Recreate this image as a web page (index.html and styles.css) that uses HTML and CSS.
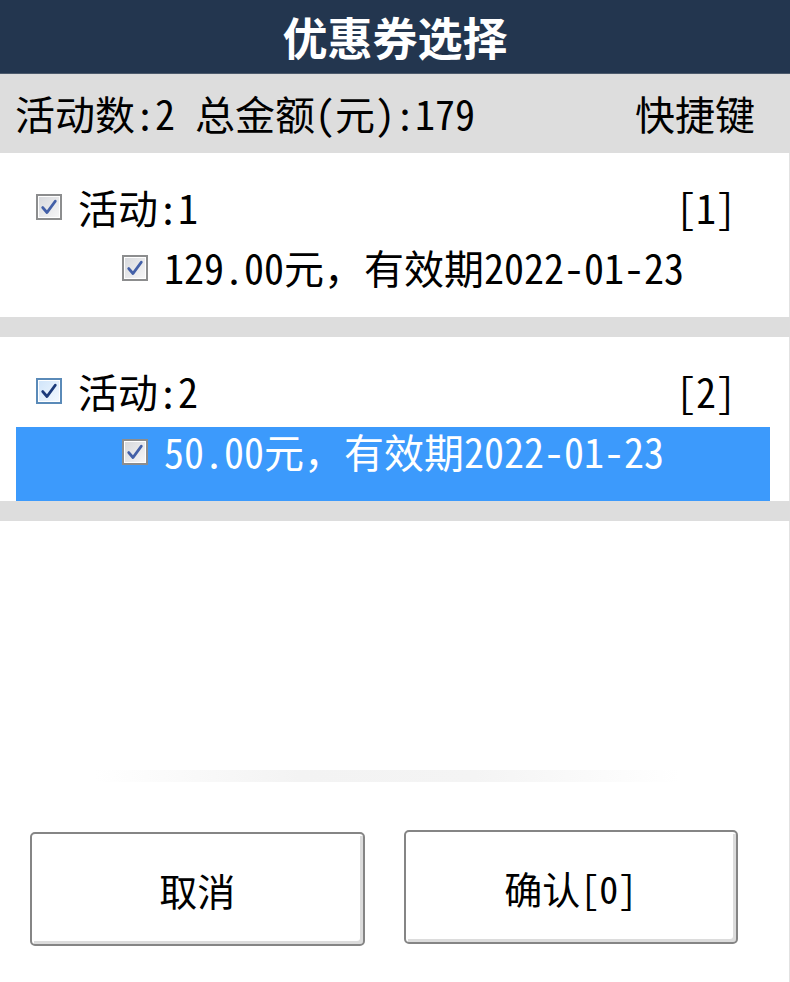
FILE: index.html
```html
<!DOCTYPE html>
<html lang="zh-CN">
<head>
    <meta charset="UTF-8">
    <meta name="viewport" content="width=device-width, initial-scale=1.0">
    <title>优惠券选择</title>
    <link rel="stylesheet" href="styles.css">
</head>
<body>
    <div class="dialog">
        <div class="title-bar">优惠券选择</div>

        <div class="summary">
            <span>活动数:2 总金额(元):179</span>
            <span>快捷键</span>
        </div>

        <!-- 活动 1 -->
        <div class="group">
            <div class="group-row">
                <span class="check">
                    <svg viewBox="0 0 16 16"><path d="M3 8.5 L6.4 12.4 L13 3.4" /></svg>
                </span>
                <span class="label">活动:1</span>
                <span class="key">[1]</span>
            </div>
            <div class="coupon-row">
                <span class="check">
                    <svg viewBox="0 0 16 16"><path d="M3 8.5 L6.4 12.4 L13 3.4" /></svg>
                </span>
                <span class="label">129.00元，有效期2022-01-23</span>
            </div>
        </div>

        <div class="divider"></div>

        <!-- 活动 2 -->
        <div class="group">
            <div class="group-row">
                <span class="check focus">
                    <svg viewBox="0 0 16 16"><path d="M3 8.5 L6.4 12.4 L13 3.4" /></svg>
                </span>
                <span class="label">活动:2</span>
                <span class="key">[2]</span>
            </div>
            <div class="coupon-row selected">
                <span class="check">
                    <svg viewBox="0 0 16 16"><path d="M3 8.5 L6.4 12.4 L13 3.4" /></svg>
                </span>
                <span class="label">50.00元，有效期2022-01-23</span>
            </div>
        </div>

        <div class="divider"></div>

        <div class="spacer">
            <div class="shade"></div>
        </div>

        <div class="actions">
            <button class="btn btn-cancel">取消</button>
            <button class="btn">确认[0]</button>
        </div>
    </div>
</body>
</html>
```

FILE: styles.css
```css
body {
    margin: 0;
    padding: 0;
    background-color: #ffffff;
    font-family: "Noto Sans Mono CJK SC", "Noto Sans CJK SC", sans-serif;
    color: #000;
}

.dialog {
    width: 790px;
    height: 982px;
    display: flex;
    flex-direction: column;
    overflow: hidden;
}

.title-bar {
    height: 73px;
    background-color: #23364f;
    color: #ffffff;
    font-size: 45px;
    font-weight: bold;
    line-height: 73px;
    text-align: center;
    border-bottom: 1px solid #4c5a6c;
}

.summary {
    height: 79px;
    background-color: #dddddd;
    display: flex;
    justify-content: space-between;
    align-items: center;
    padding: 0 35px 0 15px;
    font-size: 40px;
    line-height: 79px;
}

.group {
    background-color: #ffffff;
    padding-top: 18px;
    border-right: 1px solid #e2e2e2;
}

.group-row {
    height: 72px;
    display: flex;
    align-items: center;
    padding: 0 53px 0 36px;
    font-size: 40px;
}

.group-row .label {
    margin-left: 16px;
    flex: 1;
}

.coupon-row {
    height: 74px;
    margin: 0 19px 0 16px;
    padding-left: 106px;
    display: flex;
    align-items: flex-start;
    font-size: 40px;
}

.coupon-row .check {
    margin-top: 12px;
}

.coupon-row .label {
    margin-left: 16px;
    line-height: 48px;
}

.coupon-row.selected {
    background-color: #3c9afc;
    color: #ffffff;
}

.check {
    width: 22px;
    height: 22px;
    flex: none;
    border: 2px solid #8c8d8e;
    box-shadow: inset 0 0 0 1px #ffffff;
    background: linear-gradient(135deg, #d6d8dc, #f7f7f8);
    display: flex;
    align-items: center;
    justify-content: center;
}

.check svg {
    width: 20px;
    height: 20px;
}

.check path {
    fill: none;
    stroke: #4360a8;
    stroke-width: 2.3;
    stroke-linecap: round;
    stroke-linejoin: round;
}

.check.focus {
    border-color: #5a8ab8;
    background: linear-gradient(135deg, #cfe4fa, #f4f9ff);
}

.check.focus path {
    stroke: #1c3a7a;
}

.divider {
    height: 20px;
    background-color: #dddddd;
}

.spacer {
    flex: 1;
    display: flex;
    flex-direction: column;
    justify-content: flex-end;
    border-right: 1px solid #e2e2e2;
}

.shade {
    height: 12px;
    margin: 0 110px 48px 95px;
    background: linear-gradient(90deg, rgba(255,255,255,0), #f3f3f3 35%, #f4f4f4 65%, rgba(255,255,255,0));
}

.actions {
    display: flex;
    align-items: flex-start;
    gap: 39px;
    padding: 0 51px 36px 30px;
    border-right: 1px solid #e2e2e2;
}

.btn {
    width: 335px;
    height: 114px;
    background-color: #ffffff;
    border: 2px solid #858585;
    border-radius: 5px;
    box-shadow: inset 2px 2px 0 #ffffff, inset -3px -3px 0 #dcdcdc;
    font-family: "Noto Sans Mono CJK SC", "Noto Sans CJK SC", sans-serif;
    font-size: 38px;
    color: #000;
    padding: 0;
    cursor: pointer;
}

.btn-cancel {
    margin-top: 2px;
}
```
